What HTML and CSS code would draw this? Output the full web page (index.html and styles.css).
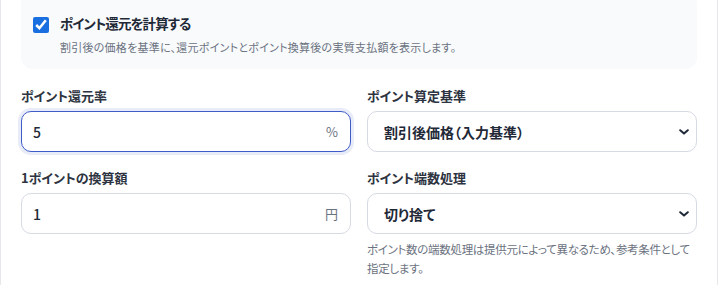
FILE: index.html
```html
<!DOCTYPE html>
<html lang="ja">
<head>
<meta charset="UTF-8">
<meta name="viewport" content="width=device-width, initial-scale=1.0">
<title>ポイント還元設定</title>
<link rel="stylesheet" href="styles.css">
</head>
<body>

<div class="card">
    <label class="toggle-box">
        <input type="checkbox" class="toggle-check" checked>
        <span class="toggle-text">
            <span class="toggle-title">ポイント還元を計算する</span>
            <span class="toggle-desc">割引後の価格を基準に、還元ポイントとポイント換算後の実質支払額を表示します。</span>
        </span>
    </label>

    <div class="form-grid">
        <div class="form-item">
            <label class="form-label">ポイント還元率</label>
            <div class="field is-focused">
                <input type="text" class="field-input" value="5">
                <span class="field-suffix">%</span>
            </div>
        </div>

        <div class="form-item">
            <label class="form-label">ポイント算定基準</label>
            <div class="select-wrap">
                <select class="field-select">
                    <option>割引後価格（入力基準）</option>
                    <option>割引前価格</option>
                </select>
                <svg class="select-arrow" width="10" height="6" viewBox="0 0 10 6">
                    <path d="M1.2 1.2 L5 4.6 L8.8 1.2" fill="none" stroke="#1f2937" stroke-width="2" stroke-linecap="round" stroke-linejoin="round"/>
                </svg>
            </div>
        </div>

        <div class="form-item">
            <label class="form-label">1ポイントの換算額</label>
            <div class="field">
                <input type="text" class="field-input" value="1">
                <span class="field-suffix">円</span>
            </div>
        </div>

        <div class="form-item">
            <label class="form-label">ポイント端数処理</label>
            <div class="select-wrap">
                <select class="field-select">
                    <option>切り捨て</option>
                    <option>四捨五入</option>
                    <option>切り上げ</option>
                </select>
                <svg class="select-arrow" width="10" height="6" viewBox="0 0 10 6">
                    <path d="M1.2 1.2 L5 4.6 L8.8 1.2" fill="none" stroke="#1f2937" stroke-width="2" stroke-linecap="round" stroke-linejoin="round"/>
                </svg>
            </div>
            <p class="form-help">ポイント数の端数処理は提供元によって異なるため、参考条件として指定します。</p>
        </div>
    </div>
</div>

</body>
</html>
```

FILE: styles.css
```css
/* page */
body {
    margin: 0;
    padding: 0;
    background-color: #fff;
    font-family: "Noto Sans CJK JP", "Noto Sans", sans-serif;
    font-feature-settings: "palt";
    color: #1f2937;
    overflow: hidden;
}

.card {
    box-sizing: border-box;
    width: 718px;
    margin-top: -8px;
    padding: 0 20px 40px;
    border: 1px solid #e5e7eb;
    border-width: 0 1px;
    background-color: #fff;
}

/* checkbox block */
.toggle-box {
    display: flex;
    align-items: flex-start;
    gap: 11px;
    padding: 20px 12px 12px;
    background-color: #f8fafc;
    border-radius: 12px;
}

.toggle-check {
    width: 16px;
    height: 16px;
    margin: 5px 0 0;
    accent-color: #1a6fe0;
    flex-shrink: 0;
}

.toggle-text {
    display: flex;
    flex-direction: column;
}

.toggle-title {
    font-size: 13.5px;
    font-weight: 700;
    line-height: 22px;
    letter-spacing: -0.9px;
    color: #1f2937;
}

.toggle-desc {
    margin-top: 4px;
    font-size: 11px;
    line-height: 19px;
    letter-spacing: 0.25px;
    color: #6b7280;
}

/* form */
.form-grid {
    display: grid;
    grid-template-columns: 1fr 1fr;
    column-gap: 16px;
    row-gap: 17px;
    margin-top: 18px;
}

.form-item {
    display: flex;
    flex-direction: column;
}

.form-label {
    margin-bottom: 6px;
    font-size: 13px;
    font-weight: 700;
    line-height: 18px;
    color: #2d3340;
}

.field {
    display: flex;
    align-items: center;
    box-sizing: border-box;
    height: 41px;
    padding: 0 12px 0 11px;
    border: 1px solid #d5dae3;
    border-radius: 10px;
    background-color: #fff;
}

.field.is-focused {
    border: 1.5px solid #3f5cc9;
    box-shadow: 0 0 0 3px rgba(63, 92, 201, 0.12);
}

.field-input {
    flex: 1;
    min-width: 0;
    border: none;
    outline: none;
    padding: 0;
    font-family: inherit;
    font-size: 14px;
    font-weight: 500;
    color: #1f2937;
    background: transparent;
}

.field-suffix {
    font-size: 13px;
    color: #6b7280;
}

.select-wrap {
    position: relative;
}

.field-select {
    appearance: none;
    -webkit-appearance: none;
    box-sizing: border-box;
    width: 100%;
    height: 41px;
    padding: 0 32px 0 16px;
    border: 1px solid #d5dae3;
    border-radius: 10px;
    background-color: #fff;
    font-family: inherit;
    font-feature-settings: "palt";
    font-size: 14px;
    font-weight: 700;
    color: #1f2937;
}

.select-arrow {
    position: absolute;
    right: 8px;
    top: 18px;
    pointer-events: none;
}

.form-help {
    margin: 6px 0 0;
    font-size: 11.5px;
    line-height: 19px;
    letter-spacing: -0.3px;
    color: #6b7280;
}
```
